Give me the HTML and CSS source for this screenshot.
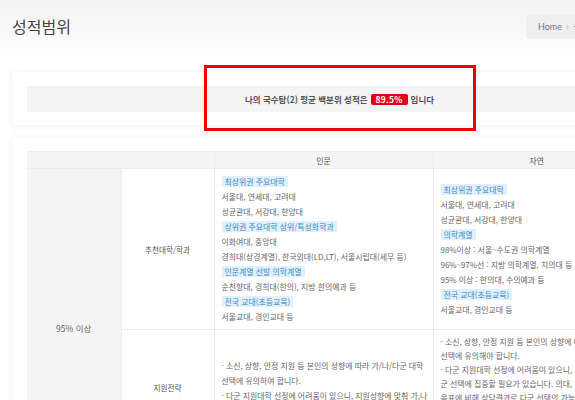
FILE: index.html
```html
<!DOCTYPE html>
<html lang="ko">
<head>
<meta charset="utf-8">
<title>성적범위</title>
<link rel="stylesheet" href="styles.css">
</head>
<body>
<div class="page">
  <header class="topbar">
    <h1 class="title">성적범위</h1>
    <nav class="crumb">Home <span class="sep">›</span> 성적분석 <span class="sep">›</span> 성적범위</nav>
  </header>

  <section class="card score-card">
    <div class="scorebar">나의 국수탐(2) 평균 백분위 성적은 <b class="badge">89.5%</b> 입니다</div>
    <div class="highlight"></div>
  </section>

  <section class="card table-card">
    <table class="range">
      <colgroup>
        <col class="c1"><col class="c2"><col class="c3"><col class="c4">
      </colgroup>
      <thead>
        <tr>
          <th colspan="2"></th>
          <th>인문</th>
          <th>자연</th>
        </tr>
      </thead>
      <tbody>
        <tr class="row-univ">
          <td rowspan="3" class="level">95% 이상</td>
          <td class="label">추천대학/학과</td>
          <td class="list">
            <div class="ln"><span class="tag">최상위권 주요대학</span></div>
            <div class="ln">서울대, 연세대, 고려대</div>
            <div class="ln">성균관대, 서강대, 한양대</div>
            <div class="ln"><span class="tag">상위권 주요대학 상위/특성화학과</span></div>
            <div class="ln">이화여대, 중앙대</div>
            <div class="ln">경희대(상경계열), 한국외대(LD,LT), 서울시립대(세무 등)</div>
            <div class="ln"><span class="tag">인문계열 선발 의학계열</span></div>
            <div class="ln">순천향대, 경희대(한의), 지방 한의예과 등</div>
            <div class="ln"><span class="tag">전국 교대(초등교육)</span></div>
            <div class="ln">서울교대, 경인교대 등</div>
          </td>
          <td class="list">
            <div class="ln"><span class="tag">최상위권 주요대학</span></div>
            <div class="ln">서울대, 연세대, 고려대</div>
            <div class="ln">성균관대, 서강대, 한양대</div>
            <div class="ln"><span class="tag">의학계열</span></div>
            <div class="ln">98%이상 : 서울~수도권 의학계열</div>
            <div class="ln">96%~97%선 : 지방 의학계열, 치의대 등</div>
            <div class="ln">95% 이상 : 한의대, 수의예과 등</div>
            <div class="ln"><span class="tag">전국 교대(초등교육)</span></div>
            <div class="ln">서울교대, 경인교대 등</div>
          </td>
        </tr>
        <tr class="row-strategy">
          <td class="label">지원전략</td>
          <td class="list">
            <div class="ln">· 소신, 상향, 안정 지원 등 본인의 성향에 따라 가/나/다군 대학</div>
            <div class="ln">선택에 유의하여 합니다.</div>
            <div class="ln">· 다군 지원대학 선정에 어려움이 있으니, 지원성향에 맞춰 가,나</div>
            <div class="ln">군 선택에 집중할 필요가 있습니다.</div>
          </td>
          <td class="list dense">
            <div class="ln">· 소신, 상향, 안정 지원 등 본인의 성향에 따라 가/나/다군 대학</div>
            <div class="ln">선택에 유의해야 합니다.</div>
            <div class="ln">· 다군 지원대학 선정에 어려움이 있으니, 지원성향에 맞춰 가,나</div>
            <div class="ln">군 선택에 집중할 필요가 있습니다. 의대, 한의대 등 상위권</div>
            <div class="ln">목표에 비해 상담결과로 다군 선택의 가능성이 높습니다.</div>
            <div class="ln">· 지원 가능한 대학의 전형 요소를 꼼꼼히 확인하여</div>
            <div class="ln">유리한 전형을 선택하시기 바랍니다.</div>
          </td>
        </tr>
        <tr class="row-note">
          <td class="label">참고사항</td>
          <td class="list">
            <div class="ln">· 대학별 환산점수를 반드시 확인하시기 바랍니다.</div>
          </td>
          <td class="list">
            <div class="ln">· 대학별 환산점수를 반드시 확인하시기 바랍니다.</div>
          </td>
        </tr>
      </tbody>
    </table>
  </section>
</div>
</body>
</html>
```

FILE: styles.css
```css
html, body {
  margin: 0;
  padding: 0;
  overflow: hidden;
}
body {
  background: linear-gradient(to bottom, #f3f3f3 0, #ffffff 60px) no-repeat, #fcfcfc;
  font-family: "Noto Sans CJK KR", "Noto Sans", sans-serif;
  color: #666;
}
.page {
  width: 680px;
}
.topbar {
  display: grid;
  grid-template-columns: 514px auto;
  align-items: start;
  padding: 14px 0 0 12px;
  height: 58px;
}
.title {
  margin: 0;
  font-size: 16px;
  font-weight: 400;
  line-height: 25px;
  color: #444;
  justify-self: start;
}
.crumb {
  justify-self: start;
  height: 25px;
  line-height: 25px;
  padding: 0 12px;
  background: #efefef;
  border-radius: 3px;
  font-family: Lato, "Noto Sans CJK KR", sans-serif;
  font-size: 9px;
  color: #777;
  white-space: nowrap;
}
.crumb .sep {
  color: #aaa;
  margin: 0 2px;
}
.card {
  margin-left: 12px;
  width: 655px;
  background: #fff;
  box-shadow: 0 1px 7px rgba(0, 0, 0, 0.07);
  border-radius: 3px;
  box-sizing: border-box;
}
.score-card {
  position: relative;
  padding: 14px 15px 13px;
}
.scorebar {
  height: 26px;
  background: #f4f4f4;
  display: flex;
  align-items: center;
  justify-content: center;
  gap: 3px;
  font-size: 8.5px;
  font-weight: 700;
  color: #555;
}
.badge {
  background: #e60012;
  color: #fff;
  font-weight: 700;
  padding: 0 5px;
  line-height: 11px;
  border-radius: 2px;
  letter-spacing: 0.2px;
}
.highlight {
  position: absolute;
  left: 192px;
  top: -7px;
  width: 272px;
  height: 66px;
  box-sizing: border-box;
  border: 3px solid #f00000;
}
.table-card {
  margin-top: 12px;
  padding: 14px 15px;
}
.range {
  border-collapse: collapse;
  table-layout: fixed;
  width: 613px;
  font-size: 7.9px;
}
.c1 { width: 94px; }
.c2 { width: 93px; }
.c3 { width: 219px; }
.c4 { width: 207px; }
.range th {
  height: 16px;
  padding: 0;
  background: #f4f4f4;
  border: 1px solid #ececec;
  border-left: none;
  font-size: 8px;
  font-weight: 400;
  color: #555;
  line-height: 15px;
}
.range td {
  border: 1px solid #ececec;
  border-left: none;
  vertical-align: middle;
  padding: 5px 7px;
}
.range td + td,
.range th + th {
  border-left: 1px solid #ececec;
}
.level {
  background: #f4f4f4;
  text-align: center;
  font-size: 8.5px;
  color: #666;
}
.label {
  text-align: center;
  color: #555;
  font-size: 7.6px;
}
.row-univ td {
  height: 149px;
}
.row-strategy td {
  height: 105px;
}
.row-note td {
  height: 31px;
}
.list .ln {
  line-height: 15px;
  white-space: nowrap;
  color: #666;
}
.list.dense {
  vertical-align: top;
  padding-top: 5px;
}
.list.dense .ln {
  line-height: 14px;
}
.tag {
  display: inline-block;
  background: #e1f0fb;
  color: #3a8cc9;
  padding: 0 3px;
  line-height: 11px;
}
```
